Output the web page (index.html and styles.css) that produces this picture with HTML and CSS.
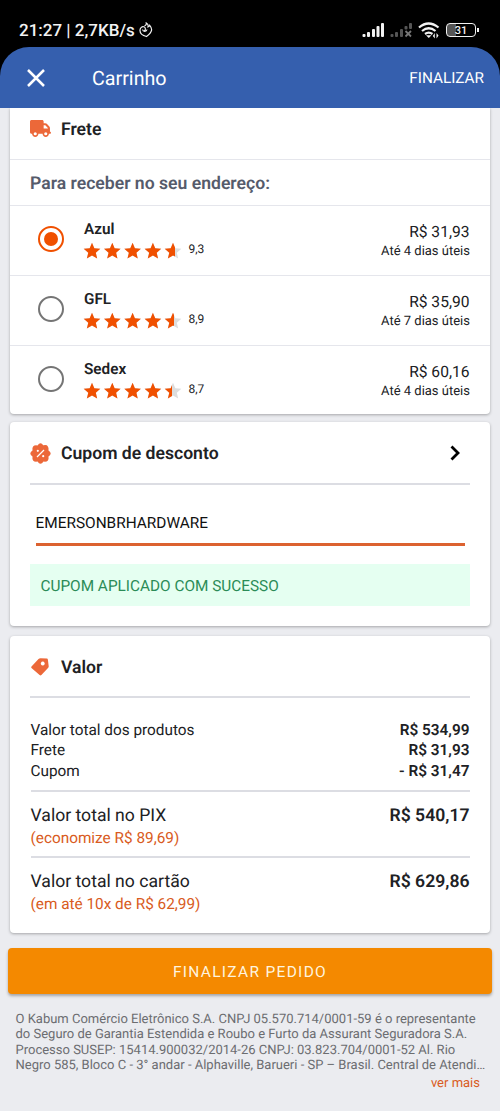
FILE: index.html
```html
<!DOCTYPE html>
<html lang="pt-BR">
<head>
    <meta charset="UTF-8">
    <meta name="viewport" content="width=device-width, initial-scale=1.0">
    <title>Carrinho</title>
    <link rel="stylesheet" href="styles.css">
</head>
<body>
    <!-- shared star shape -->
    <svg class="defs" width="0" height="0">
        <symbol id="star" viewBox="0 0 24 24">
            <path d="M12 17.3 18.2 21l-1.6-7L22 9.2l-7.2-.6L12 2 9.2 8.600 2 9.200 7.500 14 5.800 21z"/>
        </symbol>
        <symbol id="stars" viewBox="0 0 101 20">
            <use href="#star" x="0" y="0" width="20" height="20"/>
            <use href="#star" x="20.300" y="0" width="20" height="20"/>
            <use href="#star" x="40.600" y="0" width="20" height="20"/>
            <use href="#star" x="60.900" y="0" width="20" height="20"/>
            <use href="#star" x="81" y="0" width="20" height="20"/>
        </symbol>
    </svg>

    <div class="status-bar">
        <span class="status-text">21:27 | 2,7KB/s</span>
        <svg class="status-flame" width="14" height="16" viewBox="0 0 14 16">
            <path d="M5.500 4C7 3.300 7.500 2.300 7.300 1c1.700 1 2.200 2.300 1.700 3.900 1-.2 1.500-.8 1.700-1.600C13.500 6.500 13.800 10 7.500 14.500 3.500 13.500.8 11 1 8c.2-2 2-3.800 3.800-3.200 2.200.8 2 3.500.3 4.200M3.500 7.500c.5 2.500 4 2.500 4.500 0"/>
        </svg>
        <div class="status-icons">
            <svg width="23" height="16" viewBox="0 0 23 16" fill="#f2f2f2">
                <rect x="0.500" y="12" width="3" height="3" rx="1"/>
                <rect x="5" y="10" width="3" height="5" rx="1"/>
                <rect x="10" y="7" width="3" height="8" rx="1"/>
                <rect x="14.500" y="4" width="3" height="11" rx="1"/>
                <rect x="19" y="1" width="3" height="14" rx="1"/>
            </svg>
            <svg class="signal-off" width="23" height="16" viewBox="0 0 23 16" fill="#555">
                <rect x="0.500" y="12" width="3" height="3" rx="1"/>
                <rect x="5" y="10" width="3" height="5" rx="1"/>
                <rect x="10" y="7" width="3" height="8" rx="1"/>
                <rect x="14.500" y="4" width="3" height="3.500" rx="1"/>
                <rect x="19" y="1" width="3" height="6" rx="1"/>
                <path d="M15.500 9l5.500 5.500M21 9l-5.500 5.500" stroke="#777" stroke-width="1.800"/>
            </svg>
            <svg class="wifi" width="22" height="17" viewBox="0 0 22 17" fill="none" stroke="#f2f2f2" stroke-width="2.200">
                <path d="M1 5.500q9.500-8 19.500 0M4 9q6.700-5.500 13.500 0M7 12q3.700-2.800 7.500 0"/>
                <path d="M8 13.300h5.500L10.800 16z" fill="#f2f2f2" stroke="none"/>
                <path d="M16.800 11v5.500l-2-2.500zM18.500 16.500V11l2 2.500z" fill="#f2f2f2" stroke="none"/>
            </svg>
            <div class="battery"><span>31</span></div>
        </div>
    </div>

    <header class="header">
        <svg width="20" height="20" viewBox="0 0 20 20">
            <path d="M2 2l16 16M18 2L2 18" stroke="#fff" stroke-width="2.500"/>
        </svg>
        <h1 class="header-title">Carrinho</h1>
        <a class="header-action">FINALIZAR</a>
    </header>

    <main>
        <section class="card card-shipping">
            <div class="card-title shipping-title">
                <svg width="21" height="17" viewBox="0 0 640 512">
                    <path d="M48 0C21.500 0 0 21.500 0 48V368c0 26.500 21.500 48 48 48H64c0 53 43 96 96 96s96-43 96-96H384c0 53 43 96 96 96s96-43 96-96h32c17.700 0 32-14.300 32-32s-14.300-32-32-32V237.300c0-17-6.700-33.300-18.700-45.300L512 114.700c-12-12-28.300-18.700-45.300-18.700H416V48c0-26.500-21.500-48-48-48H48zM416 160h50.700L544 237.300V256H416V160zM112 416a48 48 0 1 1 96 0 48 48 0 1 1-96 0zm368-48a48 48 0 1 1 0 96 48 48 0 1 1 0-96z"/>
                </svg>
                <h2>Frete</h2>
            </div>
            <h3 class="shipping-subtitle">Para receber no seu endereço:</h3>
            <div class="option">
                <span class="radio radio-on"></span>
                <div class="option-info">
                    <strong>Azul</strong>
                    <div class="rating">
                        <div class="stars">
                            <svg class="stars-base"><use href="#stars" width="101" height="20"/></svg>
                            <div class="stars-fill" style="width: 92.500%"><svg><use href="#stars" width="101" height="20"/></svg></div>
                        </div>
                        <span>9,3</span>
                    </div>
                </div>
                <div class="option-price">
                    <span>R$ 31,93</span>
                    <small>Até 4 dias úteis</small>
                </div>
            </div>
            <div class="option">
                <span class="radio"></span>
                <div class="option-info">
                    <strong>GFL</strong>
                    <div class="rating">
                        <div class="stars">
                            <svg class="stars-base"><use href="#stars" width="101" height="20"/></svg>
                            <div class="stars-fill" style="width: 92%"><svg><use href="#stars" width="101" height="20"/></svg></div>
                        </div>
                        <span>8,9</span>
                    </div>
                </div>
                <div class="option-price">
                    <span>R$ 35,90</span>
                    <small>Até 7 dias úteis</small>
                </div>
            </div>
            <div class="option">
                <span class="radio"></span>
                <div class="option-info">
                    <strong>Sedex</strong>
                    <div class="rating">
                        <div class="stars">
                            <svg class="stars-base"><use href="#stars" width="101" height="20"/></svg>
                            <div class="stars-fill" style="width: 90%"><svg><use href="#stars" width="101" height="20"/></svg></div>
                        </div>
                        <span>8,7</span>
                    </div>
                </div>
                <div class="option-price">
                    <span>R$ 60,16</span>
                    <small>Até 4 dias úteis</small>
                </div>
            </div>
        </section>

        <section class="card card-coupon">
            <div class="card-title">
                <svg width="21" height="21" viewBox="0 0 21 21">
                    <path d="M10.500.3Q12 .3 13.200 2.300 17 1.500 17.700 3.300 18.900 4.500 18.500 7.500 20.700 9 20.700 10.500T18.500 13.500Q19 16.500 17.700 17.700 16.500 19 13.500 18.500 12 20.700 10.500 20.700T7.500 18.500Q4.500 19 3.300 17.700 2 16.500 2.500 13.500.3 12 .3 10.500T2.500 7.500Q2 4.500 3.300 3.300 4.500 2 7.500 2.500 9 .3 10.500.3z"/>
                    <path d="M7 14l7-7" stroke="#fff" stroke-width="1.300"/>
                    <circle cx="7.800" cy="7.800" r="1.100" fill="#fff"/>
                    <circle cx="13.200" cy="13.200" r="1.100" fill="#fff"/>
                </svg>
                <h2>Cupom de desconto</h2>
                <svg class="chevron" width="10" height="16" viewBox="0 0 10 16">
                    <path d="M1.500 1.500L8 8l-6.500 6.500"/>
                </svg>
            </div>
            <input class="coupon-input" type="text" value="EMERSONBRHARDWARE">
            <p class="coupon-message">CUPOM APLICADO COM SUCESSO</p>
        </section>

        <section class="card card-total">
            <div class="card-title">
                <svg width="21" height="20" viewBox="0 0 21 20">
                    <path fill-rule="evenodd" d="M1.500 9.500L8.500 2q.8-.8 2-.8l6.300.4q1 .1 1.100 1.100l.8 6.500q.1 1-.7 1.800l-6.600 7.100q-.9.900-1.800 0L1.500 10.900q-.7-.7 0-1.400zM12.700 4.600a2 2 0 1 0 .1 0z"/>
                </svg>
                <h2>Valor</h2>
            </div>
            <div class="summary">
                <div class="line"><span>Valor total dos produtos</span><strong>R$ 534,99</strong></div>
                <div class="line"><span>Frete</span><strong>R$ 31,93</strong></div>
                <div class="line"><span>Cupom</span><strong>- R$ 31,47</strong></div>
            </div>
            <div class="total">
                <div class="line"><span>Valor total no PIX</span><strong>R$ 540,17</strong></div>
                <p>(economize R$ 89,69)</p>
            </div>
            <div class="total">
                <div class="line"><span>Valor total no cartão</span><strong>R$ 629,86</strong></div>
                <p>(em até 10x de R$ 62,99)</p>
            </div>
        </section>

        <button class="checkout">FINALIZAR PEDIDO</button>
    </main>

    <footer class="footer">
        <p>O Kabum Comércio Eletrônico S.A. CNPJ 05.570.714/0001-59 é o representante<br>
        do Seguro de Garantia Estendida e Roubo e Furto da Assurant Seguradora S.A.<br>
        Processo SUSEP: 15414.900032/2014-26 CNPJ: 03.823.704/0001-52 Al. Rio<br>
        Negro 585, Bloco C - 3° andar - Alphaville, Barueri - SP – Brasil. Central de Atendi…</p>
        <a>ver mais</a>
    </footer>
</body>
</html>
```

FILE: styles.css
```css
:root {
    --blue: #355fae;
    --orange: #f05000;
    --orange-icon: #ec6839;
    --orange-text: #d95b22;
    --page: #ebecf0;
    --line: #dcdde3;
    --text: #202124;
}

* {
    margin: 0;
    padding: 0;
    box-sizing: border-box;
}

body {
    height: 1111px;
    overflow: hidden;
    font-family: Roboto, sans-serif;
    font-size: 15px;
    background-color: var(--page);
    color: var(--text);
    text-rendering: geometricPrecision;
}

svg {
    display: block;
    flex-shrink: 0;
}

.defs {
    position: absolute;
}

/* status bar */
.status-bar {
    display: flex;
    align-items: center;
    height: 76px;
    padding: 0 22px 16px 19px;
    background-color: #000;
    color: #f2f2f2;
}

.status-text {
    padding-top: 2px;
    font-size: 17px;
    font-weight: 500;
}

.status-flame {
    margin-left: 4px;
    fill: none;
    stroke: #f2f2f2;
    stroke-width: 1.2;
}

.status-icons {
    display: flex;
    align-items: center;
    margin-left: auto;
}

.signal-off {
    margin-left: 5px;
}

.wifi {
    margin: 0 6px 0 5px;
}

.battery {
    position: relative;
    width: 30px;
    height: 14px;
    margin-right: 2px;
    border: 1.5px solid #f2f2f2;
    border-radius: 4px;
    background: linear-gradient(to right, #555 31%, #000 31%);
    font-size: 11px;
    font-weight: 500;
    line-height: 13px;
    text-align: center;
}

.battery::after {
    content: "";
    position: absolute;
    right: -4px;
    top: 4px;
    width: 2px;
    height: 4px;
    background-color: #f2f2f2;
}

/* header overlaps the black bar so its corners stay black */
.header {
    display: flex;
    align-items: center;
    height: 61px;
    margin-top: -29px;
    padding: 0 16px 0 26px;
    position: relative;
    border-radius: 29px 29px 0 0;
    background-color: var(--blue);
    color: #fff;
}

.header-title {
    margin-left: 46px;
    padding-top: 2px;
    font-size: 19.7px;
    font-weight: 400;
}

.header-action {
    margin-left: auto;
    padding-top: 1px;
    font-size: 15.3px;
}

/* cards */
.card {
    margin: 0 10px;
    border-radius: 4px;
    background-color: #fff;
    box-shadow: 0 1px 3px rgba(0, 0, 0, 0.3);
}

.card-title {
    display: flex;
    align-items: center;
    gap: 10px;
    height: 62px;
    border-bottom: 2px solid var(--line);
    fill: var(--orange-icon);
}

.card-title h2 {
    padding-top: 2px;
    font-size: 17.6px;
    font-weight: 600;
}

.card-shipping {
    height: 306px;
    border-radius: 0 0 4px 4px;
}

.shipping-title {
    height: 52px;
    padding: 0 20px 10px;
    border-bottom: 1px solid #e5e6ec;
}

.shipping-subtitle {
    height: 46px;
    padding-left: 20px;
    border-bottom: 1px solid #e5e6ec;
    color: #555b6b;
    font-size: 17.6px;
    font-weight: 600;
    line-height: 48px;
}

.option {
    display: flex;
    height: 70px;
    padding: 13px 20px 0 28px;
    border-bottom: 1px solid #e5e6ec;
}

.option:last-child {
    height: 69px;
    border-bottom: none;
}

.radio {
    width: 26px;
    height: 26px;
    margin: 7px 20px 0 0;
    border: 2.5px solid #757575;
    border-radius: 50%;
}

.radio-on {
    padding: 4px;
    border-color: var(--orange);
    background: var(--orange) content-box;
}

.option-info strong {
    display: block;
    font-size: 15.3px;
    font-weight: 600;
    line-height: 20px;
}

.rating {
    display: flex;
    gap: 6px;
    margin: 2px 0 0 -2.5px;
    font-size: 12px;
    line-height: 17px;
}

.stars {
    position: relative;
    width: 101px;
    height: 20px;
}

.stars svg {
    width: 101px;
    height: 20px;
}

.stars-base {
    fill: #ddd;
}

.stars-fill {
    position: absolute;
    left: 0;
    top: 0;
    overflow: hidden;
    fill: var(--orange);
}

.option-price {
    margin-left: auto;
    padding-top: 3px;
    text-align: right;
    font-size: 15.6px;
    line-height: 20px;
}

.option-price span,
.option-price small {
    display: block;
}

.option-price span {
    margin-right: 0.5px;
}

.option-price small {
    font-size: 13px;
    line-height: 19px;
}

.card-coupon {
    height: 204px;
    margin-top: 8px;
    padding: 1px 20px 0;
}

.chevron {
    margin: 0 10px 0 auto;
    fill: none;
    stroke: #000;
    stroke-width: 2.8;
}

.coupon-input {
    display: block;
    width: 429px;
    height: 43px;
    margin: 18px auto;
    border: none;
    border-bottom: 3px solid #dc6230;
    outline: none;
    background: none;
    color: #111;
    font-family: inherit;
    font-size: 15.4px;
    text-rendering: inherit;
}

.coupon-message {
    height: 42px;
    padding-left: 10.5px;
    background-color: #e5fff1;
    color: #2b8c57;
    font-size: 15.35px;
    line-height: 44px;
}

.card-total {
    height: 297px;
    margin-top: 10px;
    padding: 0 20.5px;
}

.card-total .card-title {
    padding-top: 1px;
    margin-left: -0.5px;
}

.line {
    display: flex;
    justify-content: space-between;
}

.line strong {
    font-weight: 600;
}

.summary {
    padding: 22px 0 9px;
    font-size: 15.35px;
    line-height: 20.4px;
}

.total {
    height: 66px;
    padding-top: 12px;
    border-top: 2px solid var(--line);
    font-size: 17.6px;
    line-height: 24px;
}

.total p {
    color: var(--orange-text);
    font-size: 15.35px;
    line-height: 20px;
}

.checkout {
    display: block;
    width: 484px;
    height: 46px;
    padding-top: 2px;
    margin: 15px auto 0;
    border: none;
    border-radius: 4px;
    background-color: #f48900;
    box-shadow: 0 2px 3px rgba(0, 0, 0, 0.3);
    color: #fff4df;
    font-family: inherit;
    font-size: 15.5px;
    letter-spacing: 1.3px;
    text-rendering: inherit;
}

.footer {
    padding: 18px 16px 0 15.5px;
    color: #6c6d70;
    font-size: 13px;
    line-height: 15.4px;
    white-space: nowrap;
}

.footer a {
    display: block;
    margin: 2px 4px 0 0;
    color: var(--orange-text);
    text-align: right;
}
```
